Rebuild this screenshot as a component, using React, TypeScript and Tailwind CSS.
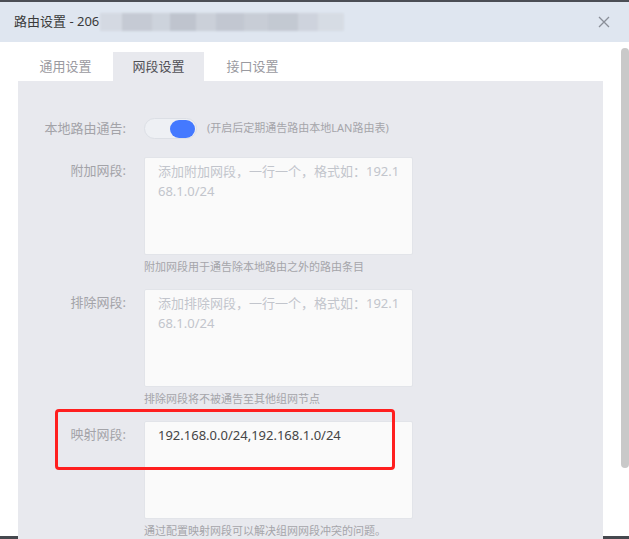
import React from 'react';

const font = "font-[family-name:'Noto_Sans','Noto_Sans_CJK_SC',sans-serif]";

// blurred-out part of the title (mosaic)
const blurBlocks = [
  { w: 'w-[22px]', c: 'bg-[#d3d8e1]' },
  { w: 'w-[30px]', c: 'bg-[#c3c8d1]' },
  { w: 'w-[18px]', c: 'bg-[#ccd1da]' },
  { w: 'w-[26px]', c: 'bg-[#bcc1cb]' },
  { w: 'w-[20px]', c: 'bg-[#c9ced7]' },
  { w: 'w-[28px]', c: 'bg-[#bfc4ce]' },
  { w: 'w-[24px]', c: 'bg-[#c6cbd4]' },
  { w: 'w-[30px]', c: 'bg-[#c1c6cf]' },
  { w: 'w-[20px]', c: 'bg-[#cdd2db]' },
  { w: 'w-[26px]', c: 'bg-[#d6dbe3]' },
];

const Field: React.FC<{
  label: string;
  placeholder?: string;
  value?: string;
  help: string;
  children?: React.ReactNode;
}> = ({ label, placeholder, value, help, children }) => (
  <div className="relative flex items-start mb-[13px]">
    <label className="w-[108px] shrink-0 text-right text-[13px] leading-[20px] pt-[3px] text-[#a3a3a8]">
      {label}
    </label>
    <div className="ml-[18px] w-[269px]">
      <textarea
        readOnly
        placeholder={placeholder}
        defaultValue={value}
        className="block w-full h-[98px] resize-none rounded-[2px] border border-[#e2e4e9] bg-[#fafafa] pl-[13px] pr-[6px] py-[3px] text-[13px] leading-[20px] text-[#454545] placeholder:text-[#c2c5cc] break-all outline-none"
      />
      <p className="mt-[3px] text-[11px] leading-[18px] text-[#a5a5aa]">{help}</p>
    </div>
    {children}
  </div>
);

export default function App() {
  return (
    <div className={`w-[629px] h-[539px] overflow-hidden bg-white flex flex-col ${font}`}>
      <div className="h-[2px] bg-[#4b4e55]" />

      {/* Header */}
      <header className="h-[40px] shrink-0 bg-[#dfe6f0] flex items-center pl-[14px] pr-[19px]">
        <span className="text-[13px] text-[#3a3a3a]">路由设置 - 206</span>
        <div className="ml-[1px] flex h-[18px] blur-[1px] opacity-90">
          {blurBlocks.map((b, i) => (
            <span key={i} className={`${b.w} ${b.c} h-full`} />
          ))}
        </div>
        <button className="ml-auto text-[#8a8f98]">
          <svg width="12" height="12" viewBox="0 0 12 12" fill="none" stroke="currentColor" strokeWidth="1.3">
            <path d="M1 1L11 11M11 1L1 11" />
          </svg>
        </button>
      </header>

      {/* Body */}
      <div className="relative flex-1 flex flex-col pl-[18px] pr-[26px] min-h-0">
        <div className="flex gap-[2px] pt-[10px] pl-[2px] text-[13px]">
          <div className="w-[91px] h-[29px] flex items-center justify-center text-[#9a9aa0]">通用设置</div>
          <div className="w-[91px] h-[29px] flex items-center justify-center bg-[#e8e9ee] text-[#505055]">网段设置</div>
          <div className="w-[91px] h-[29px] flex items-center justify-center text-[#9a9aa0] ml-[1px]">接口设置</div>
        </div>

        <div className="flex-1 bg-[#e8e9ee] pt-[37px]">
          {/* 本地路由通告 */}
          <div className="flex items-center h-[21px] mb-[18px]">
            <label className="w-[108px] shrink-0 text-right text-[13px] text-[#a3a3a8]">本地路由通告:</label>
            <div className="ml-[18px] w-[53px] h-[21px] rounded-full border border-[#dcdfe5] bg-[#eef0f4] flex items-center justify-end pr-[1px]">
              <span className="w-[25px] h-[18px] rounded-full bg-[#4479ff]" />
            </div>
            <span className="ml-[10px] text-[11px] text-[#a5a5aa]">(开启后定期通告路由本地LAN路由表)</span>
          </div>

          <Field
            label="附加网段:"
            placeholder="添加附加网段，一行一个，格式如：192.168.1.0/24"
            help="附加网段用于通告除本地路由之外的路由条目"
          />
          <Field
            label="排除网段:"
            placeholder="添加排除网段，一行一个，格式如：192.168.1.0/24"
            help="排除网段将不被通告至其他组网节点"
          />
          <Field
            label="映射网段:"
            value="192.168.0.0/24,192.168.1.0/24"
            help="通过配置映射网段可以解决组网网段冲突的问题。"
          >
            <div className="absolute left-[37px] top-[-12px] w-[340px] h-[61px] rounded-[4px] border-[3px] border-[#ff1f1f] pointer-events-none" />
          </Field>
        </div>

        {/* scrollbar thumb */}
        <div className="absolute right-0 top-[6px] w-[8px] h-[420px] rounded-full bg-[#c9c9c9]" />
      </div>

      <div className="h-[3px] shrink-0 bg-[#45484e]" />
    </div>
  );
}
